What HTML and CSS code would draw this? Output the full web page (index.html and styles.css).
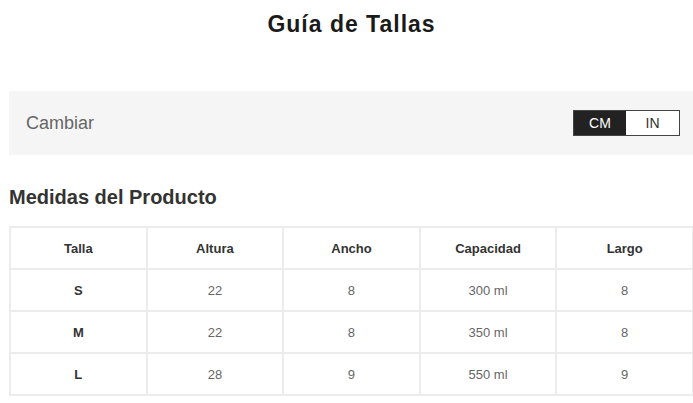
FILE: index.html
```html
<!DOCTYPE html>
<html lang="es">
<head>
<meta charset="utf-8">
<title>Guía de Tallas</title>
<link rel="stylesheet" href="styles.css">
</head>
<body>
<div class="page">
  <h1 class="title">Guía de Tallas</h1>
  <div class="switch-bar">
    <span class="switch-label">Cambiar</span>
    <div class="unit-toggle">
      <span class="unit active">CM</span>
      <span class="unit">IN</span>
    </div>
  </div>
  <h2 class="section-title">Medidas del Producto</h2>
  <table class="size-table">
    <thead>
      <tr><th>Talla</th><th>Altura</th><th>Ancho</th><th>Capacidad</th><th>Largo</th></tr>
    </thead>
    <tbody>
      <tr><td class="size">S</td><td>22</td><td>8</td><td>300 ml</td><td>8</td></tr>
      <tr><td class="size">M</td><td>22</td><td>8</td><td>350 ml</td><td>8</td></tr>
      <tr><td class="size">L</td><td>28</td><td>9</td><td>550 ml</td><td>9</td></tr>
    </tbody>
  </table>
</div>
</body>
</html>
```
FILE: styles.css
```css
html, body {
  margin: 0;
  padding: 0;
  overflow: hidden;
  background: #fff;
}
body {
  font-family: "Liberation Sans", Arial, sans-serif;
  color: #333;
}
.page {
  width: 685px;
  padding: 0 0 0 9px;
}
.title {
  margin: 0;
  padding-top: 10px;
  height: 91px;
  box-sizing: border-box;
  text-align: center;
  font-size: 23px;
  font-weight: bold;
  letter-spacing: 1px;
  color: #1a1a1a;
  line-height: 28px;
}
.switch-bar {
  height: 64px;
  background: #f5f5f5;
  display: flex;
  align-items: center;
  justify-content: space-between;
  padding: 0 14px 0 17px;
  box-sizing: border-box;
}
.switch-label {
  font-size: 18px;
  color: #666;
}
.unit-toggle {
  display: flex;
  border: 1px solid #444;
  height: 26px;
  box-sizing: border-box;
}
.unit {
  display: flex;
  align-items: center;
  justify-content: center;
  font-size: 14px;
  color: #333;
  background: #fff;
  width: 53px;
}
.unit.active {
  background: #222;
  color: #fff;
  width: 52px;
}
.section-title {
  margin: 0;
  padding-top: 30px;
  height: 71px;
  box-sizing: border-box;
  font-size: 20px;
  font-weight: bold;
  color: #333;
  line-height: 24px;
}
.size-table {
  width: 685px;
  border-collapse: collapse;
  table-layout: fixed;
}
.size-table th,
.size-table td {
  border: 2px solid #ececec;
  height: 42px;
  padding: 0;
  text-align: center;
  font-size: 13px;
  box-sizing: border-box;
}
.size-table th {
  font-weight: bold;
  color: #333;
}
.size-table td {
  color: #666;
}
.size-table td.size {
  font-weight: bold;
  color: #333;
}
```
